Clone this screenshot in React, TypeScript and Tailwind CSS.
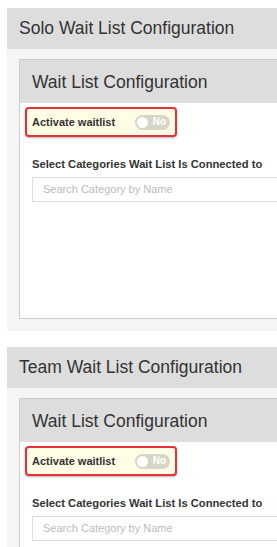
import React from "react";

function Toggle() {
  return (
    <div className="flex items-center h-[15px] w-[35px] rounded-full bg-[#d6d6c6] pl-[2px] pr-[4px] gap-[5px]">
      <div className="h-[11px] w-[11px] rounded-full bg-white" />
      <span className="text-[10px] font-bold text-white leading-none">No</span>
    </div>
  );
}

function Section({ title }: { title: string }) {
  return (
    <div className="w-[330px]">
      <div className="h-[41px] bg-[#dddddd] flex items-center pl-[12px] text-[17.5px] text-[#333333]">
        {title}
      </div>
      <div className="bg-[#f5f5f5] pt-[10px] pb-[12px] pl-[12px]">
        <div className="border border-[#cccccc] bg-white h-[260px]">
          <div className="h-[43px] bg-[#dddddd] flex items-center pl-[12px] pt-[2px] text-[17.5px] text-[#333333]">
            Wait List Configuration
          </div>
          <div className="pl-[5px] pt-[4px]">
            <div className="w-[152px] h-[30px] border-[2.5px] border-[#e53238] rounded-[4px] bg-[#fffde6] flex items-center pl-[5px] gap-[20px] shadow-[0_1px_2px_rgba(0,0,0,0.3)]">
              <span className="text-[11px] font-bold text-[#333333]">Activate waitlist</span>
              <Toggle />
            </div>
            <div className="pl-[7px] mt-[21px] text-[11.2px] font-bold text-[#333333] leading-[13px]">
              Select Categories Wait List Is Connected to
            </div>
            <div className="ml-[7px] mt-[6px] h-[25px] border border-[#dddddd] flex items-center pl-[10px] text-[11px] text-[#bbbbbb]">
              Search Category by Name
            </div>
          </div>
        </div>
      </div>
    </div>
  );
}

export default function App() {
  return (
    <div className="w-[277px] h-[547px] overflow-hidden bg-white" style={{ fontFamily: '"Liberation Sans", Arial, sans-serif' }}>
      <div className="pt-[8px] pl-[7px] flex flex-col gap-[16px]">
        <Section title="Solo Wait List Configuration" />
        <Section title="Team Wait List Configuration" />
      </div>
    </div>
  );
}
